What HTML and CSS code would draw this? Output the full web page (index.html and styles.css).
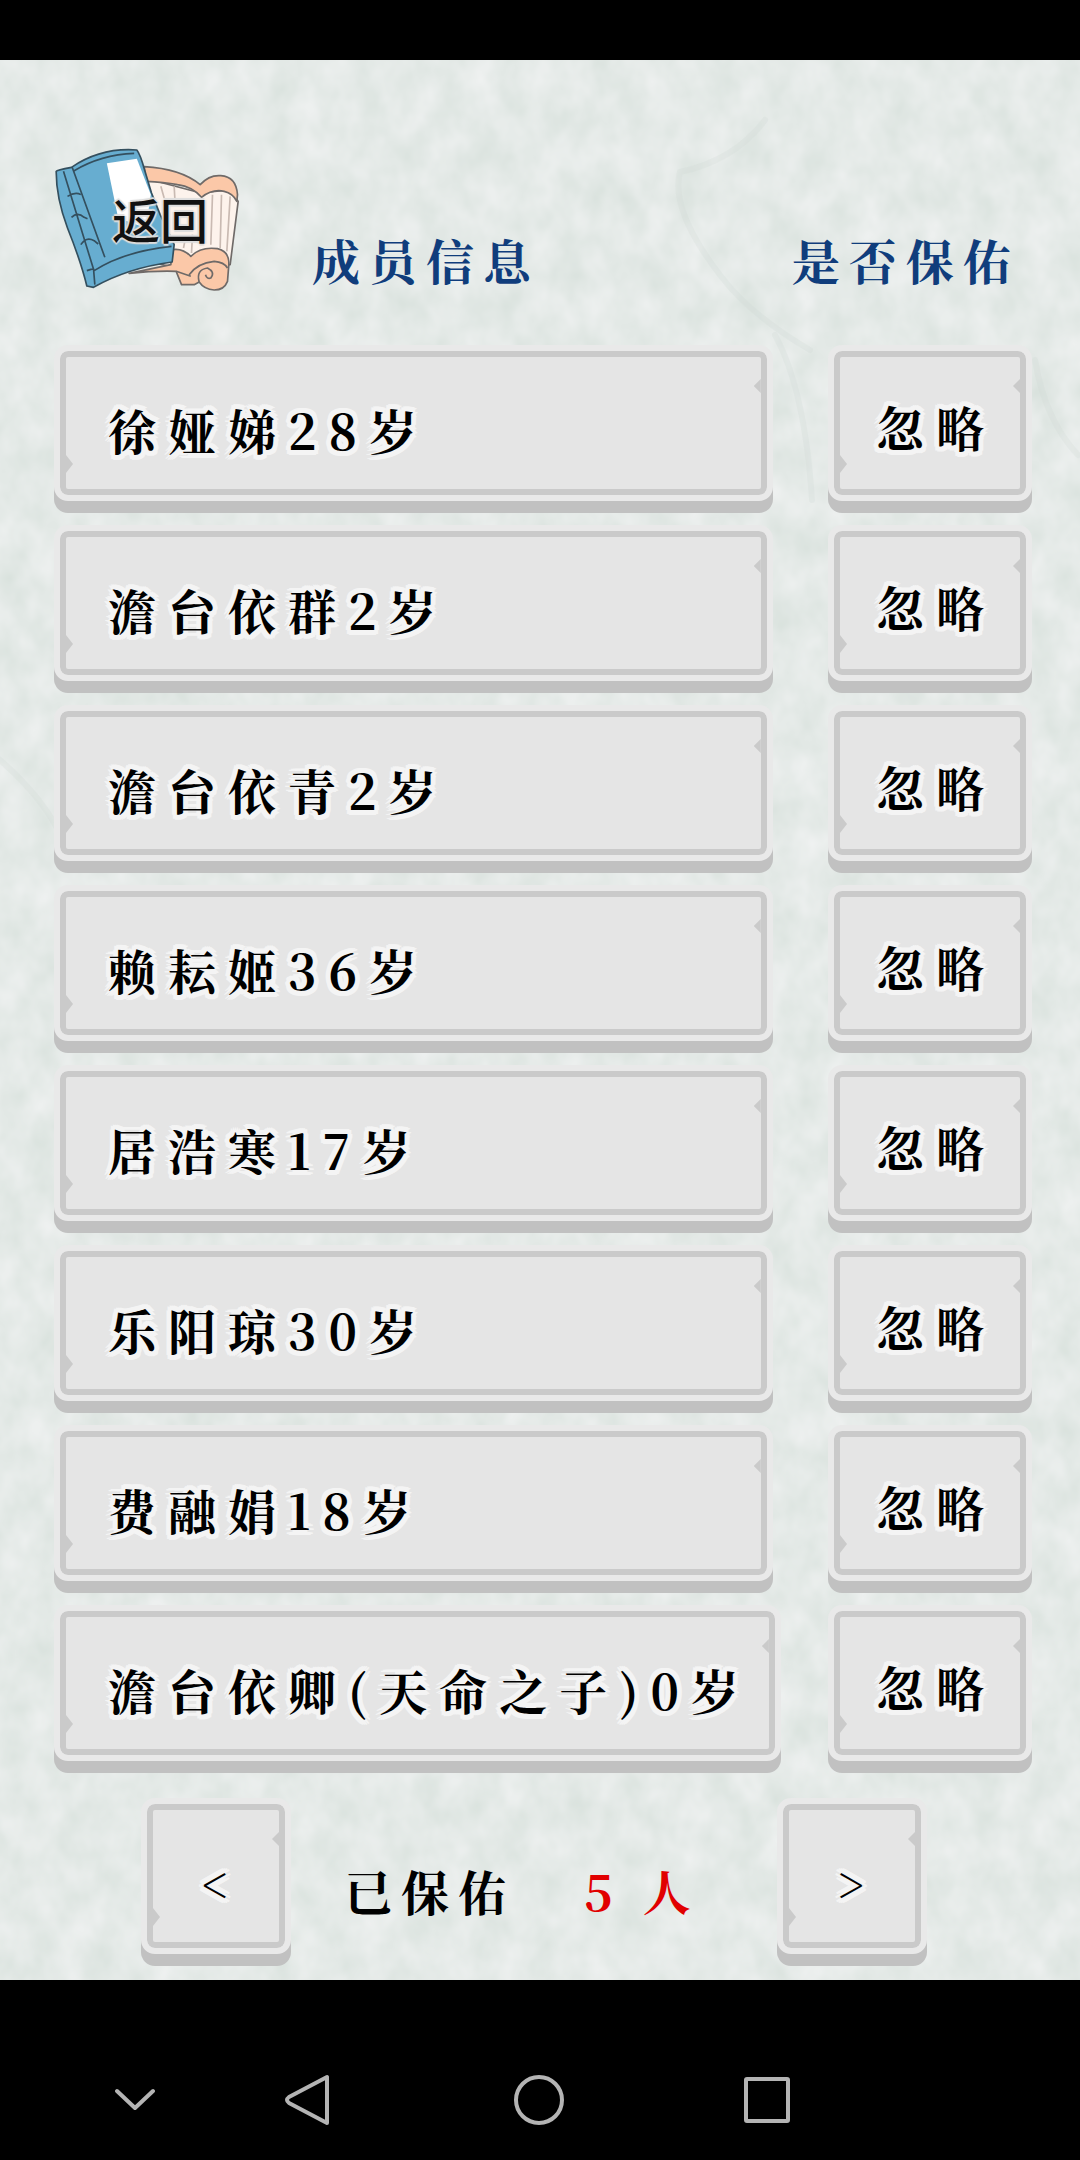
FILE: index.html
```html
<!DOCTYPE html>
<html lang="zh-CN">
<head>
    <meta charset="UTF-8">
    <meta name="viewport" content="width=device-width, initial-scale=1.0">
    <title>成员信息</title>
    <link rel="stylesheet" href="styles.css">
</head>
<body>
    <div class="status-bar"></div>

    <main class="game">
        <!-- rice paper background -->
        <svg class="paper" aria-hidden="true">
            <filter id="mottle" x="0" y="0" width="100%" height="100%" color-interpolation-filters="sRGB">
                <feTurbulence type="fractalNoise" baseFrequency="0.034 0.026" numOctaves="3" seed="7"/>
                <feColorMatrix values="0.1 0 0 0 0.846  0.07 0 0 0 0.882  0.09 0 0 0 0.862  0 0 0 0 1"/>
            </filter>
            <rect width="100%" height="100%" filter="url(#mottle)"/>
            <g fill="none" stroke="#ccd6d2" stroke-width="6" stroke-linecap="round" opacity="0.22">
                <path d="M765 60Q735 100 680 112Q670 150 720 215Q750 255 810 290"/>
                <path d="M0 700Q40 735 58 770"/>
                <path d="M775 275Q805 330 812 440"/>
                <path d="M1035 300Q1045 360 1078 395"/>
            </g>
        </svg>

        <header class="top">
            <button class="back" type="button">
                <svg viewBox="70 60 560 435" aria-hidden="true">
                    <g stroke="#6f6a68" stroke-width="5" stroke-linejoin="round">
                        <path fill="#fdf3ec" d="M340 150L510 195L600 185L622 220L598 410L440 420L350 400Z"/>
                        <path fill="#fbc8a8" d="M340 116Q450 122 508 170Q535 140 570 143Q616 146 620 200L618 220Q606 196 580 190Q545 182 512 208Q485 176 440 170Q400 162 345 160Z"/>
                        <path fill="#fbc8a8" d="M295 436L420 410L425 365Q455 360 480 385Q510 355 560 362Q596 370 594 410L590 460Q580 486 550 486Q520 484 505 462L490 470L452 470L436 430Q370 428 295 436Z"/>
                        <path fill="none" d="M475 440Q500 405 550 400Q580 402 590 420M505 462Q495 425 530 420Q554 432 540 450Q528 454 524 440M436 430L480 445"/>
                        <path fill="none" stroke="#c9bab2" d="M390 175L400 210M430 175L432 210M545 200L540 350M572 200L568 360M598 205L588 370M485 320L482 375M462 340L458 360"/>
                    </g>
                    <g stroke="#344f5e" stroke-width="5" stroke-linejoin="round">
                        <path fill="#67add0" d="M76 130Q78 126 122 118Q210 58 318 66Q328 78 342 128L362 195L388 260L430 350L424 402Q290 420 188 478L168 474Q150 400 110 300Q76 210 76 130Z"/>
                        <path fill="#fff" stroke="none" d="M228 106L318 92L360 200L345 300L262 270Z"/>
                        <path fill="none" d="M98 130L190 430M124 118L222 388M110 205Q134 190 150 200M122 268Q140 250 160 268L170 272M150 350Q166 324 190 338L202 348M190 428Q280 370 422 355M168 428L188 422L192 470M130 128Q210 80 310 76"/>
                    </g>
                </svg>
                <span class="back-label">返回</span>
            </button>
            <h1 class="title">成员信息</h1>
            <h2 class="title">是否保佑</h2>
        </header>

        <ul class="members">
            <li>
                <button class="plate name" type="button">徐娅娣28岁</button>
                <button class="plate choice" type="button">忽略</button>
            </li>
            <li>
                <button class="plate name" type="button">澹台依群2岁</button>
                <button class="plate choice" type="button">忽略</button>
            </li>
            <li>
                <button class="plate name" type="button">澹台依青2岁</button>
                <button class="plate choice" type="button">忽略</button>
            </li>
            <li>
                <button class="plate name" type="button">赖耘姬36岁</button>
                <button class="plate choice" type="button">忽略</button>
            </li>
            <li>
                <button class="plate name" type="button">居浩寒17岁</button>
                <button class="plate choice" type="button">忽略</button>
            </li>
            <li>
                <button class="plate name" type="button">乐阳琼30岁</button>
                <button class="plate choice" type="button">忽略</button>
            </li>
            <li>
                <button class="plate name" type="button">费融娟18岁</button>
                <button class="plate choice" type="button">忽略</button>
            </li>
            <li>
                <button class="plate name" type="button">澹台依卿(天命之子)0岁</button>
                <button class="plate choice" type="button">忽略</button>
            </li>
        </ul>

        <footer class="pager">
            <button class="plate page" type="button">&lt;</button>
            <p class="blessed">已保佑 <span class="count">5 人</span></p>
            <button class="plate page" type="button">&gt;</button>
        </footer>
    </main>

    <nav class="system-bar">
        <button type="button" aria-label="收起"><svg width="40" height="56" viewBox="0 0 40 56"><path d="M2 19L20 36L38 19"/></svg></button>
        <button type="button" aria-label="返回"><svg width="48" height="56" viewBox="0 0 48 56"><path d="M44 5V51L6 31Q2 28 6 25Z"/></svg></button>
        <button type="button" aria-label="主页"><svg width="56" height="56" viewBox="0 0 56 56"><circle cx="28" cy="28" r="23"/></svg></button>
        <button type="button" aria-label="最近任务"><svg width="48" height="56" viewBox="0 0 48 56"><rect x="3" y="7" width="42" height="42" rx="1"/></svg></button>
    </nav>
</body>
</html>
```

FILE: styles.css
```css
* {
    box-sizing: border-box;
}

body {
    margin: 0;
    min-height: 100vh;
    display: flex;
    flex-direction: column;
    background-color: #000;
    font-family: "Noto Serif CJK SC", "Liberation Serif", "Noto Sans CJK SC", serif;
    font-size: 48px;
    font-weight: bold;
    font-kerning: none;
    color: #000;
}

button {
    font: inherit;
    font-kerning: none;
    color: inherit;
    border: none;
    padding: 0;
    background: none;
    cursor: pointer;
}

.status-bar {
    height: 60px;
}

.game {
    position: relative;
    flex: 1;
    padding: 88px 48px 0 54px;
    background-color: #e6ebe8;
}

.paper {
    position: absolute;
    top: 0;
    left: 0;
    width: 100%;
    height: 100%;
}

.top, .members, .pager {
    position: relative;
}

/* header */
.top {
    display: flex;
    align-items: flex-end;
    padding-right: 12px;
    margin-bottom: 52px;
}

.back {
    position: relative;
    width: 187px;
    height: 145px;
    margin-right: 71px;
}

.back svg {
    display: block;
    width: 100%;
    height: 100%;
}

.back-label {
    position: absolute;
    top: 42px;
    left: 58px;
    font-family: "Noto Sans CJK SC", sans-serif;
    font-size: 48px;
    line-height: 56px;
    font-weight: 500;
    color: #111;
    text-shadow: 2px 0 1px #ddd, -2px 0 1px #ddd, 0 2px 1px #ddd, 0 -2px 1px #ddd;
}

.title {
    margin: 0;
    font-size: 48px;
    line-height: 66px;
    letter-spacing: 9px;
    color: #103d7c;
}

h2.title {
    margin-left: auto;
}

/* member rows */
.members {
    list-style: none;
    margin: 0;
    padding: 0;
    display: grid;
    gap: 12px;
}

.members li {
    display: grid;
    grid-template-columns: 1fr 204px;
    gap: 48px;
}

.plate {
    position: relative;
    height: 156px;
    margin-bottom: 12px;
    padding-top: 12px;
    border: 6px solid #e9e9e9;
    border-radius: 14px;
    background-color: #e5e5e5;
    box-shadow: inset 0 0 0 6px #cacaca, 0 12px 0 #c1c1c1;
    letter-spacing: 12px;
    white-space: nowrap;
    text-shadow: 5px 0 #f4f4f4, -5px 0 #f4f4f4, 0 5px #f4f4f4, 0 -5px #f4f4f4,
        4px 4px #f4f4f4, -4px 4px #f4f4f4, 4px -4px #f4f4f4, -4px -4px #f4f4f4,
        2px 5px #f4f4f4, -2px 5px #f4f4f4, 2px -5px #f4f4f4, -2px -5px #f4f4f4;
}

/* chips in the frame */
.plate::before, .plate::after {
    content: "";
    position: absolute;
    width: 7px;
    background-color: #cacaca;
}

.plate::before {
    left: 6px;
    bottom: 22px;
    height: 18px;
    clip-path: polygon(0 0, 100% 50%, 0 100%);
}

.plate::after {
    right: 6px;
    top: 28px;
    height: 14px;
    clip-path: polygon(100% 0, 0 50%, 100% 100%);
}

.name {
    justify-self: start;
    min-width: 99%;
    padding-left: 48px;
    padding-right: 24px;
    text-align: left;
}

.choice {
    padding-top: 6px;
    padding-left: 12px;
}

/* footer */
.pager {
    display: flex;
    justify-content: space-between;
    align-items: flex-start;
    margin-top: 25px;
    padding: 0 105px 0 87px;
}

.page {
    width: 150px;
    padding-left: 10px;
    font-weight: normal;
}

.blessed {
    margin: 0;
    padding: 60px 24px 0 0;
    line-height: 66px;
    letter-spacing: 9px;
}

.count {
    margin-left: 48px;
    color: #e10000;
}

/* phone navigation */
.system-bar {
    display: flex;
    align-items: center;
    height: 180px;
    padding: 60px 0 0 115px;
}

.system-bar svg {
    display: block;
    fill: none;
    stroke: #b4b4b4;
    stroke-width: 4;
    stroke-linejoin: round;
    stroke-linecap: round;
}

.system-bar button:nth-child(2) {
    margin-left: 128px;
}

.system-bar button:nth-child(3) {
    margin-left: 180px;
}

.system-bar button:nth-child(4) {
    margin-left: 176px;
}
```
